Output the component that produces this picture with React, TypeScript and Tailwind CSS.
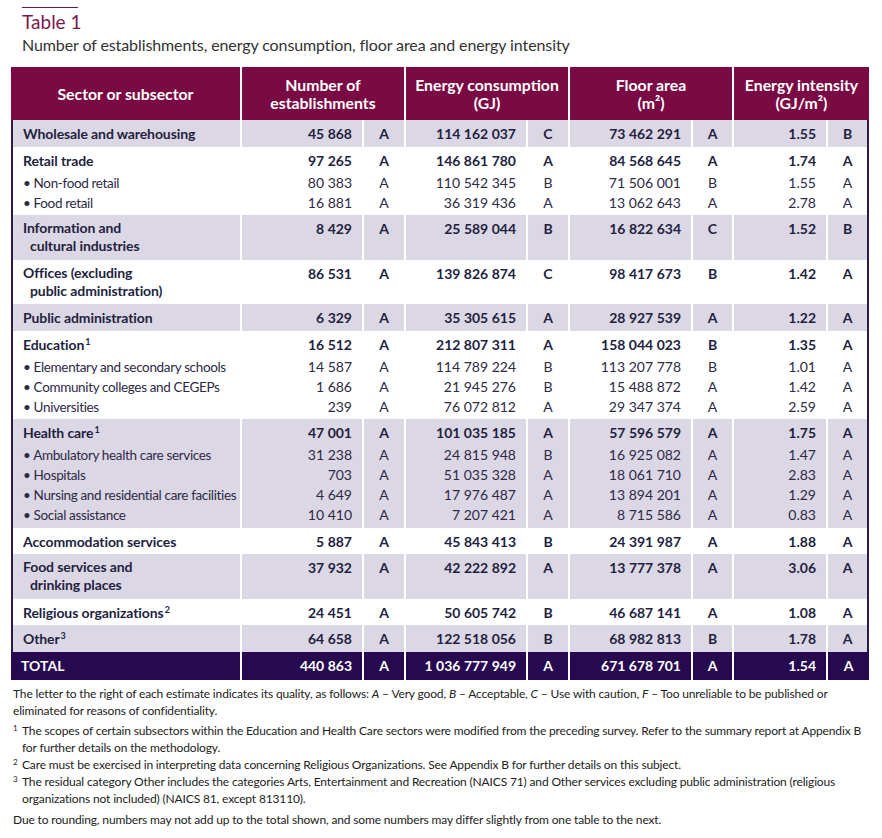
import React from "react";

type Vals = [string, string, string, string, string, string, string, string];

type Line = { label: string; sup?: string; vals: Vals };

type Block = {
  head: Line;
  wrap?: string;
  subs?: Line[];
  shaded: boolean;
};

const blocks: Block[] = [
  {
    head: { label: "Wholesale and warehousing", vals: ["45 868", "A", "114 162 037", "C", "73 462 291", "A", "1.55", "B"] },
    shaded: true,
  },
  {
    head: { label: "Retail trade", vals: ["97 265", "A", "146 861 780", "A", "84 568 645", "A", "1.74", "A"] },
    subs: [
      { label: "Non-food retail", vals: ["80 383", "A", "110 542 345", "B", "71 506 001", "B", "1.55", "A"] },
      { label: "Food retail", vals: ["16 881", "A", "36 319 436", "A", "13 062 643", "A", "2.78", "A"] },
    ],
    shaded: false,
  },
  {
    head: { label: "Information and", vals: ["8 429", "A", "25 589 044", "B", "16 822 634", "C", "1.52", "B"] },
    wrap: "cultural industries",
    shaded: true,
  },
  {
    head: { label: "Offices (excluding", vals: ["86 531", "A", "139 826 874", "C", "98 417 673", "B", "1.42", "A"] },
    wrap: "public administration)",
    shaded: false,
  },
  {
    head: { label: "Public administration", vals: ["6 329", "A", "35 305 615", "A", "28 927 539", "A", "1.22", "A"] },
    shaded: true,
  },
  {
    head: { label: "Education", sup: "1", vals: ["16 512", "A", "212 807 311", "A", "158 044 023", "B", "1.35", "A"] },
    subs: [
      { label: "Elementary and secondary schools", vals: ["14 587", "A", "114 789 224", "B", "113 207 778", "B", "1.01", "A"] },
      { label: "Community colleges and CEGEPs", vals: ["1 686", "A", "21 945 276", "B", "15 488 872", "A", "1.42", "A"] },
      { label: "Universities", vals: ["239", "A", "76 072 812", "A", "29 347 374", "A", "2.59", "A"] },
    ],
    shaded: false,
  },
  {
    head: { label: "Health care", sup: "1", vals: ["47 001", "A", "101 035 185", "A", "57 596 579", "A", "1.75", "A"] },
    subs: [
      { label: "Ambulatory health care services", vals: ["31 238", "A", "24 815 948", "B", "16 925 082", "A", "1.47", "A"] },
      { label: "Hospitals", vals: ["703", "A", "51 035 328", "A", "18 061 710", "A", "2.83", "A"] },
      { label: "Nursing and residential care facilities", vals: ["4 649", "A", "17 976 487", "A", "13 894 201", "A", "1.29", "A"] },
      { label: "Social assistance", vals: ["10 410", "A", "7 207 421", "A", "8 715 586", "A", "0.83", "A"] },
    ],
    shaded: true,
  },
  {
    head: { label: "Accommodation services", vals: ["5 887", "A", "45 843 413", "B", "24 391 987", "A", "1.88", "A"] },
    shaded: false,
  },
  {
    head: { label: "Food services and", vals: ["37 932", "A", "42 222 892", "A", "13 777 378", "A", "3.06", "A"] },
    wrap: "drinking places",
    shaded: true,
  },
  {
    head: { label: "Religious organizations", sup: "2", vals: ["24 451", "A", "50 605 742", "B", "46 687 141", "A", "1.08", "A"] },
    shaded: false,
  },
  {
    head: { label: "Other", sup: "3", vals: ["64 658", "A", "122 518 056", "B", "68 982 813", "B", "1.78", "A"] },
    shaded: true,
  },
];

const total: Vals = ["440 863", "A", "1 036 777 949", "A", "671 678 701", "A", "1.54", "A"];

const grid =
  "grid grid-cols-[229px_120px_40px_120px_40px_121px_39px_92px_41px] gap-x-[2px] bg-white";

function BlockRow({ block }: { block: Block }) {
  const bg = block.shaded ? "bg-[#dcd7e5]" : "bg-white";
  const subs = block.subs ?? [];
  return (
    <div className={grid}>
      <div className={`${bg} border-l-2 border-[#2b1a4a] pl-[10px] pt-[4px] pb-[2.5px] whitespace-nowrap`}>
        {block.wrap ? (
          <div className="font-bold leading-[18px] pb-[2px] tracking-[-0.1px]">
            <div>{block.head.label}</div>
            <div className="pl-[7px]">{block.wrap}</div>
          </div>
        ) : (
          <div className="font-bold leading-[20px] tracking-[-0.1px]">
            {block.head.label}
            {block.head.sup && (
              <sup className="text-[9px] font-bold ml-[1px] relative -top-[5px]">{block.head.sup}</sup>
            )}
          </div>
        )}
        {subs.length > 0 && (
          <div className="mt-[2px] text-[#2e2a45] text-[13.5px] tracking-[-0.35px]">
            {subs.map((s) => (
              <div key={s.label} className="leading-[20px]">
                • {s.label}
              </div>
            ))}
          </div>
        )}
      </div>
      {block.head.vals.map((v, i) => {
        const letter = i % 2 === 1;
        const last = i === 7;
        return (
          <div
            key={i}
            className={`${bg} pt-[4px] pb-[2.5px] whitespace-nowrap ${letter ? "text-center" : "text-right pr-[10px]"} ${last ? "border-r-2 border-[#2b1a4a]" : ""}`}
          >
            <div className="font-bold leading-[20px]">{v}</div>
            {subs.length > 0 && (
              <div className="mt-[2px] text-[#2e2a45]">
                {subs.map((s) => (
                  <div key={s.label} className="leading-[20px]">
                    {s.vals[i]}
                  </div>
                ))}
              </div>
            )}
          </div>
        );
      })}
    </div>
  );
}

function HeaderRow() {
  const cell = "bg-[#7a0a43] flex items-center justify-center text-center leading-[18px]";
  return (
    <div className={`${grid} text-white font-bold text-[15.8px] h-[53px]`}>
      <div className={cell}>Sector or subsector</div>
      <div className={`${cell} col-span-2`}>
        Number of
        <br />
        establishments
      </div>
      <div className={`${cell} col-span-2`}>
        Energy consumption
        <br />
        (GJ)
      </div>
      <div className={`${cell} col-span-2`}>
        Floor area
        <br />
        (m²)
      </div>
      <div className={`${cell} col-span-2`}>
        Energy intensity
        <br />
        (GJ/m²)
      </div>
    </div>
  );
}

function TotalRow() {
  return (
    <div className={`${grid} text-white font-bold`}>
      <div className="bg-[#26094f] pl-[10px] pt-[4px] pb-[4px] leading-[20px]">TOTAL</div>
      {total.map((v, i) => (
        <div
          key={i}
          className={`bg-[#26094f] pt-[4px] pb-[4px] leading-[20px] ${i % 2 === 1 ? "text-center" : "text-right pr-[10px]"}`}
        >
          {v}
        </div>
      ))}
    </div>
  );
}

export default function App() {
  return (
    <div
      className="w-[882px] h-[838px] bg-white text-[#231f3f] pt-[7px] overflow-hidden"
      style={{ fontFamily: '"Lato", "Liberation Sans", sans-serif' }}
    >
      <div className="ml-[22px] w-[56px] h-px bg-[#6b1a45]" />
      <div className="ml-[22px] mt-[2px] text-[19px] leading-[24px] text-[#7a1a4c]">Table 1</div>
      <div className="ml-[22px] text-[16px] leading-[22px] text-[#333333] tracking-[-0.1px]">
        Number of establishments, energy consumption, floor area and energy intensity
      </div>

      <div className="ml-[11px] mt-[11px] w-[858px] text-[14px]">
        <HeaderRow />
        {blocks.map((b) => (
          <BlockRow key={b.head.label} block={b} />
        ))}
        <TotalRow />
      </div>

      <div className="ml-[13px] mt-[5px] text-[12px] leading-[17px] text-[#222222] whitespace-nowrap tracking-[-0.15px]">
        <p>
          The letter to the right of each estimate indicates its quality, as follows: <i>A</i> – Very good, <i>B</i> –
          Acceptable, <i>C</i> – Use with caution, <i>F</i> – Too unreliable to be published or
          <br />
          eliminated for reasons of confidentiality.
        </p>
        <div className="mt-[3px] flex">
          <span className="w-[9px] shrink-0 text-[8px] leading-[12px]">1</span>
          <p>
            The scopes of certain subsectors within the Education and Health Care sectors were modified from the
            preceding survey. Refer to the summary report at Appendix B
            <br />
            for further details on the methodology.
          </p>
        </div>
        <div className="flex">
          <span className="w-[9px] shrink-0 text-[8px] leading-[12px]">2</span>
          <p>
            Care must be exercised in interpreting data concerning Religious Organizations. See Appendix B for further
            details on this subject.
          </p>
        </div>
        <div className="flex">
          <span className="w-[9px] shrink-0 text-[8px] leading-[12px]">3</span>
          <p>
            The residual category Other includes the categories Arts, Entertainment and Recreation (NAICS 71) and Other
            services excluding public administration (religious
            <br />
            organizations not included) (NAICS 81, except 813110).
          </p>
        </div>
        <p className="mt-[4px]">
          Due to rounding, numbers may not add up to the total shown, and some numbers may differ slightly from one
          table to the next.
        </p>
      </div>
    </div>
  );
}
